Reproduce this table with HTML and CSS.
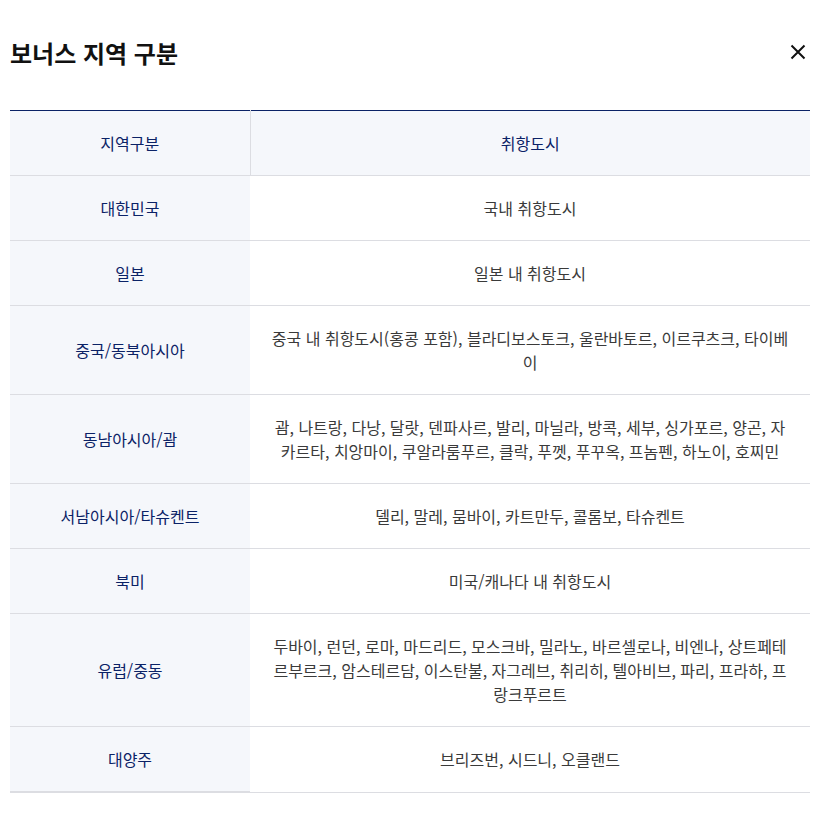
FILE: index.html
```html
<!DOCTYPE html>
<html lang="ko">
<head>
<meta charset="utf-8">
<title>보너스 지역 구분</title>
<link rel="stylesheet" href="styles.css">
</head>
<body>
<div class="modal">
  <header class="modal-head">
    <h1 class="title">보너스 지역 구분</h1>
    <button class="close" aria-label="닫기">
      <svg width="16" height="16" viewBox="0 0 16 16"><path d="M1.5 1.5 L14.5 14.5 M14.5 1.5 L1.5 14.5" stroke="#111" stroke-width="2" fill="none"/></svg>
    </button>
  </header>
  <table class="region-table">
    <colgroup><col class="c-region"><col class="c-city"></colgroup>
    <thead>
      <tr><th class="col-region">지역구분</th><th>취항도시</th></tr>
    </thead>
    <tbody>
      <tr><th>대한민국</th><td>국내 취항도시</td></tr>
      <tr><th>일본</th><td>일본 내 취항도시</td></tr>
      <tr><th>중국/동북아시아</th><td>중국 내 취항도시(홍콩 포함), 블라디보스토크, 울란바토르, 이르쿠츠크, 타이베이</td></tr>
      <tr><th>동남아시아/괌</th><td>괌, 나트랑, 다낭, 달랏, 덴파사르, 발리, 마닐라, 방콕, 세부, 싱가포르, 양곤, 자카르타, 치앙마이, 쿠알라룸푸르, 클락, 푸껫, 푸꾸옥, 프놈펜, 하노이, 호찌민</td></tr>
      <tr><th>서남아시아/타슈켄트</th><td>델리, 말레, 뭄바이, 카트만두, 콜롬보, 타슈켄트</td></tr>
      <tr><th>북미</th><td>미국/캐나다 내 취항도시</td></tr>
      <tr><th>유럽/중동</th><td>두바이, 런던, 로마, 마드리드, 모스크바, 밀라노, 바르셀로나, 비엔나, 상트페테르부르크, 암스테르담, 이스탄불, 자그레브, 취리히, 텔아비브, 파리, 프라하, 프랑크푸르트</td></tr>
      <tr><th>대양주</th><td>브리즈번, 시드니, 오클랜드</td></tr>
    </tbody>
  </table>
</div>
</body>
</html>
```
FILE: styles.css
```css
* { box-sizing: border-box; }
html, body { margin: 0; padding: 0; background: #fff; }
body {
  font-family: "Noto Sans CJK KR", "Noto Sans", sans-serif;
  color: #333;
}
.modal {
  width: 800px;
  margin-left: 10px;
}
.modal-head {
  display: flex;
  align-items: center;
  justify-content: space-between;
  height: 110px;
  padding-bottom: 6px;
}
.title {
  margin: 0;
  font-size: 24px;
  font-weight: 700;
  color: #111;
}
.close {
  border: 0;
  background: none;
  padding: 0;
  margin-right: 4px;
  width: 16px;
  height: 16px;
  display: flex;
  cursor: pointer;
}
.region-table {
  width: 800px;
  border-collapse: collapse;
  border-top: 1px solid #0b2266;
  table-layout: fixed;
  font-size: 16px;
  line-height: 24px;
}
.c-region { width: 240px; }
.c-city { width: 560px; }
.region-table th,
.region-table td {
  padding: 20px 20px;
  text-align: center;
  border-bottom: 1px solid #dcdde2;
  vertical-align: middle;
  font-weight: 400;
}
.region-table th {
  color: #0b2266;
  background: #f5f7fb;
}
.region-table td {
  color: #3a3a3a;
}
.region-table thead th {
  background: #f5f7fb;
  color: #0b2266;
}
.region-table thead th.col-region {
  border-right: 1px solid #dcdde2;
}
.region-table tbody tr:last-child th {
  border-bottom: 2px solid #dcdde2;
}
```
